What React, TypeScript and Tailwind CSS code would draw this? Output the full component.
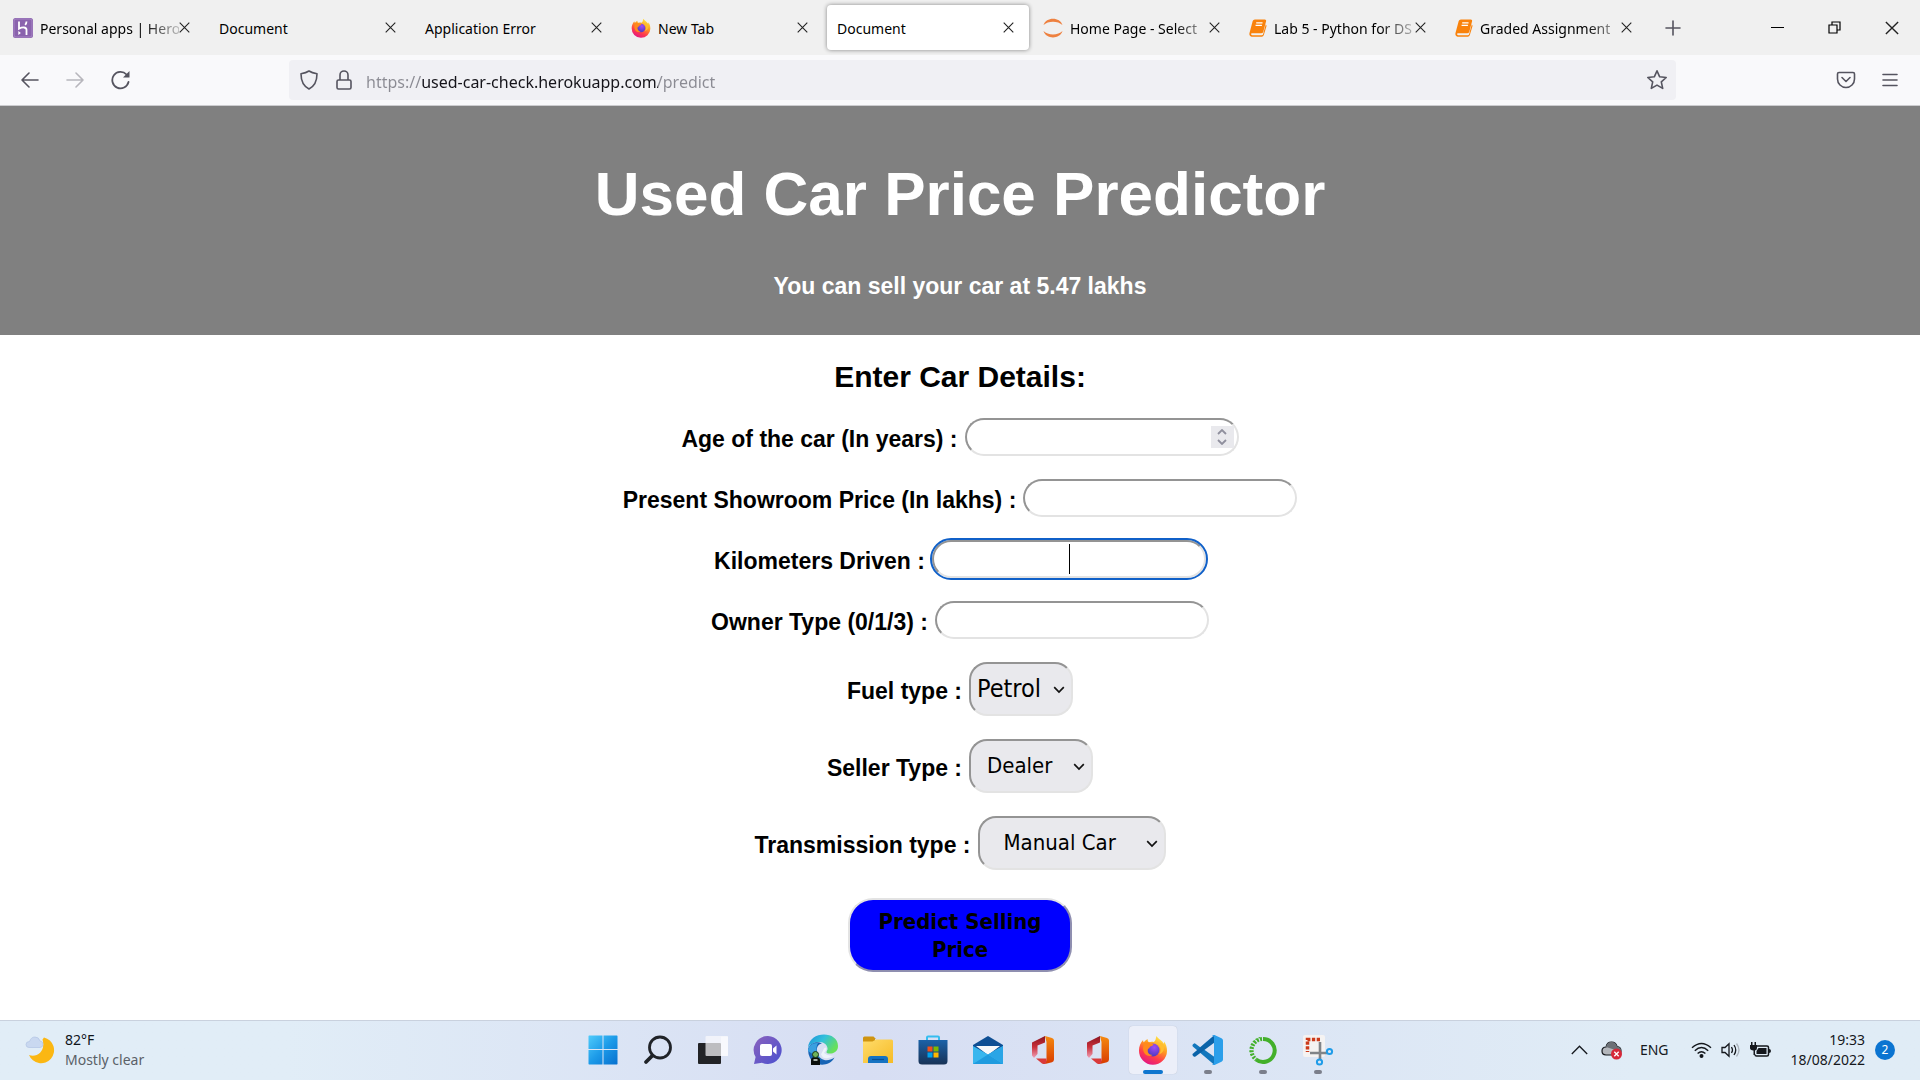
import type { ReactNode } from "react";

const HerokuIcon = () => (
  <svg width="20" height="20" viewBox="0 0 20 20" className="shrink-0">
    <rect width="20" height="20" rx="2.5" fill="#8a63ad" />
    <rect x="1" y="1" width="18" height="18" rx="2" fill="none" stroke="#a786c4" />
    <path d="M6 3.500v7.200c3-1.600 7.500-2 7.500 1.100V17M13.500 3.500c0 1.400-.6 2.500-1.400 3.300" fill="none" stroke="#fff" strokeWidth="1.800" />
    <path d="M5.300 13v4l2.600-2z" fill="#fff" />
  </svg>
);

const FirefoxIcon = ({ size, id }: { size: number; id: string }) => (
  <svg width={size} height={size} viewBox="0 0 30 30" className="shrink-0">
    <defs>
      <linearGradient id={id + "a"} x1="0.8" y1="0" x2="0.3" y2="1">
        <stop offset="0" stopColor="#fff14f" />
        <stop offset="0.4" stopColor="#ff9a1f" />
        <stop offset="0.7" stopColor="#ff3d4a" />
        <stop offset="1" stopColor="#e11586" />
      </linearGradient>
      <radialGradient id={id + "b"} cx="0.6" cy="0.3" r="0.7">
        <stop offset="0" stopColor="#a34cf5" />
        <stop offset="1" stopColor="#4a3ac0" />
      </radialGradient>
    </defs>
    <path d="M18.500 1c-1 2.500-.5 4.500-2.600 6-2-.5-4-.2-5 .3C9.800 6.500 9.500 5 9.600 4 8 4.800 6.800 6 6 7.300c-.8-.4-1-1.500-.9-2.300C2.500 7.500 1 11.500 1 15.500A14 14 0 0 0 29 16c0-4-1-7-3-9.500 0 1 0 1.700-.3 2.300C24.500 5.500 20 4 18.500 1z" fill={"url(#" + id + "a)"} />
    <circle cx="15" cy="15" r="6.500" fill={"url(#" + id + "b)"} />
    <path d="M6 8c2-1 5-.9 6.500.4 1.300 0 2.500.3 3 .9-.6 1.700-2 1.700-3.200 2.300-1 .6-.3 1.800-2.300 2.400C9 17 11 20 14.500 20 11 22.500 5 20 5 13z" fill="#ff8a1c" />
    <path d="M18 8c5 2.500 6 7.500 3 11.500 4-1.500 6-5 4.500-9.500C24 7.500 21 7 18 8z" fill="#ffbd2e" />
  </svg>
);

const JupyterIcon = () => (
  <svg width="20" height="20" viewBox="0 0 20 20" className="shrink-0">
    <path d="M0.500 7C3-1.500 17-1.500 19.500 7 15 2.500 5 2.500 0.500 7z" fill="#ee8140" />
    <path d="M0.500 13C3 21.500 17 21.500 19.500 13 15 17.500 5 17.500 0.500 13z" fill="#ee8140" />
  </svg>
);

const BookIcon = () => (
  <svg width="18" height="18" viewBox="0 0 17 17" className="shrink-0">
    <path d="M5.500.5H15q1.500.2 1.200 1.500L13.500 12q-.5 1.500-2 1.500H3q-1.500 0-1 1 .3.800 1 .8h9q1 0 1.300-1l2.500-9q1 .5.700 1.500l-2.500 8.400q-.5 1.500-2 1.500H2.500Q0 16.300.4 13.500L3.500 2Q4 .6 5.500.5z" fill="#f9820b" />
    <path d="M6.800 3.700h6M6.200 6h6" stroke="#fff" strokeWidth="1.100" />
  </svg>
);

const Close = ({ size = 11 }: { size?: number }) => (
  <svg width={size} height={size} viewBox="0 0 11 11" className="shrink-0">
    <path d="M.7.7l9.600 9.600M10.300.7L.7 10.300" stroke="#222" strokeWidth="1.100" />
  </svg>
);

type TabData = { title: string; icon?: ReactNode; active?: boolean; fade?: boolean };

const tabs: TabData[] = [
  { title: "Personal apps | Hero", icon: <HerokuIcon />, fade: true },
  { title: "Document" },
  { title: "Application Error" },
  { title: "New Tab", icon: <FirefoxIcon size={20} id="t" /> },
  { title: "Document", active: true },
  { title: "Home Page - Select", icon: <JupyterIcon />, fade: true },
  { title: "Lab 5 - Python for DS", icon: <BookIcon />, fade: true },
  { title: "Graded Assignment", icon: <BookIcon />, fade: true },
];

const Tab = ({ title, icon, active, fade }: TabData) => (
  <div
    className={
      "flex h-[45px] w-[202px] items-center rounded pl-[10px] pr-[15px] text-[14px] " +
      (active ? "bg-white shadow-[0_0_4px_rgba(0,0,0,0.45)]" : "")
    }
  >
    {icon && <span className="mr-[7px] shrink-0">{icon}</span>}
    <span
      className={
        "min-w-0 flex-1 whitespace-nowrap pt-[2px] " +
        (fade ? "[mask-image:linear-gradient(to_right,black_75%,rgba(0,0,0,0.2))]" : "")
      }
    >
      {title}
    </span>
    <button aria-label={"Close " + title}>
      <Close />
    </button>
  </div>
);

const stroke = { fill: "none", stroke: "#55545f", strokeWidth: 1.6, strokeLinecap: "round", strokeLinejoin: "round" } as const;

const TabBar = () => (
  <div className="flex h-[55px] items-center bg-[#f0f0f0] pl-[3px]">
    <div className="flex gap-1">
      {tabs.map((t, i) => (
        <Tab key={i} {...t} />
      ))}
    </div>
    <button aria-label="New tab" className="ml-[18px]">
      <svg width="16" height="16" viewBox="0 0 16 16">
        <path d="M8 1v14M1 8h14" {...stroke} />
      </svg>
    </button>
    <div className="ml-auto flex items-center gap-11 pr-[21px]">
      <button aria-label="Minimize">
        <svg width="13" height="13" viewBox="0 0 13 13">
          <path d="M0 6.500h13" stroke="#000" />
        </svg>
      </button>
      <button aria-label="Restore">
        <svg width="13" height="13" viewBox="0 0 13 13" fill="none" stroke="#000" strokeWidth="1.200">
          <path d="M1 4h8v8H1zM4 4V1h8v8H9" />
        </svg>
      </button>
      <button aria-label="Close window">
        <Close size={14} />
      </button>
    </div>
  </div>
);

const NavBar = () => (
  <div className="flex h-[51px] items-center border-b border-[#cccccf] bg-[#f9f9fb]">
    <div className="flex w-[289px] items-center gap-[27px] pl-[21px]">
      <button aria-label="Back">
        <svg width="18" height="18" viewBox="0 0 18 18"><path d="M17 9H1M8 2L1 9l7 7" {...stroke} /></svg>
      </button>
      <button aria-label="Forward" className="opacity-40">
        <svg width="18" height="18" viewBox="0 0 18 18"><path d="M1 9h16M10 2l7 7-7 7" {...stroke} /></svg>
      </button>
      <button aria-label="Reload">
        <svg width="20" height="20" viewBox="0 0 20 20">
          <path d="M17.500 12A8.200 8.200 0 1 1 15.500 4.500L17 6" {...stroke} strokeWidth="1.800" />
          <path d="M18.500 1v6.500H12z" fill="#55545f" />
        </svg>
      </button>
    </div>
    <div className="flex h-10 w-[1387px] min-w-0 shrink items-center rounded bg-[#f0f0f4] pl-[10px] pr-2">
      <svg width="20" height="20" viewBox="0 0 20 20" className="mr-4 shrink-0">
        <path d="M10 1c2.500 1.700 5 2.300 8 2.800 0 7.200-2 12.200-8 15.200C4 16 2 11 2 3.800 5 3.300 7.500 2.700 10 1z" {...stroke} />
      </svg>
      <svg width="18" height="20" viewBox="0 0 18 20" className="mr-[13px] shrink-0">
        <path d="M3.500 10h11q1.500 0 1.500 1.500v6q0 1.500-1.500 1.500h-11Q2 19 2 17.500v-6Q2 10 3.500 10zM5 10V5a4 4 0 0 1 8 0v5" {...stroke} />
      </svg>
      <input
        type="text"
        aria-label="Address"
        defaultValue="https://used-car-check.herokuapp.com/predict"
        className="min-w-0 flex-1 bg-[linear-gradient(to_right,#8b8b93_56px,#15141a_56px,#15141a_292px,#8b8b93_292px)] bg-clip-text pt-[3px] text-[16px] text-transparent outline-none"
      />
      <button aria-label="Bookmark">
        <svg width="22" height="22" viewBox="0 0 22 22">
          <path d="M11 1.800l2.700 6 6.500.7-4.900 4.400 1.400 6.500L11 16.100l-5.700 3.300 1.400-6.500L1.800 8.500l6.500-.7z" {...stroke} />
        </svg>
      </button>
    </div>
    <div className="ml-auto flex items-center gap-[26px] pr-[22px]">
      <button aria-label="Save to Pocket">
        <svg width="20" height="18" viewBox="0 0 20 18">
          <path d="M3 1.500h14q1.500 0 1.500 1.500v5a8.500 8.500 0 0 1-17 0V3Q1.500 1.500 3 1.500zM6 6.500l4 4 4-4" {...stroke} />
        </svg>
      </button>
      <button aria-label="Menu">
        <svg width="16" height="14" viewBox="0 0 16 14"><path d="M1 1.500h14M1 7h14M1 12.500h14" {...stroke} /></svg>
      </button>
    </div>
  </div>
);

const fieldBorder =
  "border-2 border-t-[#949494] border-l-[#949494] border-r-[#e3e3e3] border-b-[#e3e3e3]";

const TextField = ({ id, label, spinner, focused }: { id: string; label: string; spinner?: boolean; focused?: boolean }) => (
  <div className="flex items-center gap-[7px]">
    <label htmlFor={id} className="pt-1">{label}</label>
    <div className="relative">
      <input
        id={id}
        type="text"
        inputMode="numeric"
        className={
          "block h-[38px] w-[274px] rounded-[19px] bg-white px-4 text-center " +
          fieldBorder +
          (focused ? " outline-2 outline-[#1060c8]" : "")
        }
      />
      {spinner && (
        <span className="absolute right-[5px] top-[8px] flex h-[22px] w-[23px] items-center justify-center bg-[#e9e9ed]">
          <svg width="10" height="16" viewBox="0 0 10 16" fill="none" stroke="#8f8f9d" strokeWidth="1.800">
            <path d="M1 5l4-4 4 4M1 11l4 4 4-4" />
          </svg>
        </span>
      )}
      {focused && <span className="absolute left-1/2 top-1 h-[30px] w-px bg-black" />}
    </div>
  </div>
);

const SelectField = ({ id, label, options, look }: { id: string; label: string; options: string[]; look: string }) => (
  <div className="flex items-center gap-[7px]">
    <label htmlFor={id} className="pt-1">{label}</label>
    <div className="relative">
      <select
        id={id}
        className={
          "block h-[54px] appearance-none rounded-[18px] bg-[#e9e9ed] font-['DejaVu_Sans_Condensed','Noto_Sans',sans-serif] font-normal text-black " +
          fieldBorder + " " + look
        }
      >
        {options.map((o) => (
          <option key={o}>{o}</option>
        ))}
      </select>
      <svg width="12" height="8" viewBox="0 0 12 8" className="pointer-events-none absolute right-[8px] top-[24px]">
        <path d="M1.200 1.200L6 6l4.800-4.800" fill="none" stroke="#111" strokeWidth="1.700" />
      </svg>
    </div>
  </div>
);

const Page = () => (
  <main className="flex flex-1 flex-col bg-white font-['Liberation_Sans',Arial,sans-serif] font-bold text-black">
    <header className="flex h-[229px] flex-col items-center bg-[#808080] pt-[52px] text-white">
      <h1 className="text-[62px] leading-[72px]">Used Car Price Predictor</h1>
      <p className="mt-[42px] text-[23px] leading-7">You can sell your car at 5.47 lakhs</p>
    </header>
    <form className="flex flex-col items-center pt-6 text-[23px] leading-7" onSubmit={(e) => e.preventDefault()}>
      <h2 className="text-[30px] leading-9">Enter Car Details:</h2>
      <div className="mt-[23px] flex flex-col items-center gap-[23px]">
        <TextField id="age" label="Age of the car (In years) :" spinner />
        <TextField id="price" label="Present Showroom Price (In lakhs) :" />
        <TextField id="kms" label="Kilometers Driven :" focused />
        <TextField id="owner" label="Owner Type (0/1/3) :" />
        <SelectField id="fuel" label="Fuel type :" options={["Petrol", "Diesel", "CNG"]} look="w-[104px] pl-[6px] text-[25px]" />
        <SelectField id="seller" label="Seller Type :" options={["Dealer", "Individual"]} look="w-[124px] pl-[16px] text-[22px]" />
        <SelectField id="trans" label="Transmission type :" options={["Manual Car", "Automatic Car"]} look="w-[188px] pl-[24px] text-[22px]" />
      </div>
      <button className="mt-[28px] h-[74px] w-[224px] rounded-[25px] border-2 border-b-[#8f8fb0] border-l-[#e3e3e3] border-r-[#8f8fb0] border-t-[#e3e3e3] bg-[#0000ff] px-6 pt-[2px] font-['DejaVu_Sans_Condensed','Noto_Sans',sans-serif] text-[22px] leading-7 text-black">
        Predict Selling Price
      </button>
    </form>
  </main>
);

const OfficeIcon = ({ id }: { id: string }) => (
  <svg width="30" height="30" viewBox="0 0 30 30">
    <defs>
      <linearGradient id={id + "l"} x1="0" y1="0" x2="0" y2="1">
        <stop offset="0" stopColor="#8a1420" />
        <stop offset="0.5" stopColor="#c9303a" />
        <stop offset="1" stopColor="#f0a0b8" />
      </linearGradient>
      <linearGradient id={id + "r"} x1="0" y1="0" x2="0" y2="1">
        <stop offset="0" stopColor="#f58a10" />
        <stop offset="1" stopColor="#d83b01" />
      </linearGradient>
    </defs>
    <path d="M4 7.500L17 1v6.500l-7.500 3V19L6 23l-2-2.500z" fill={"url(#" + id + "l)"} />
    <path d="M17 1l7 2q2 .7 2 2.500v19q0 2-2 2.700L17 29l1.500-4V7z" fill={"url(#" + id + "r)"} />
    <path d="M8 23.500h10.500V27L17 29q-1.500.3-3-.5z" fill="#d93a3a" />
  </svg>
);

const Icons: { name: string; node: ReactNode; state?: "active" | "open" }[] = [
  {
    name: "Start",
    node: (
      <svg width="30" height="30" viewBox="0 0 30 30">
        <defs>
          <linearGradient id="win" x1="0" y1="0" x2="1" y2="1">
            <stop offset="0" stopColor="#4fcbfb" />
            <stop offset="0.5" stopColor="#1c9ae8" />
            <stop offset="1" stopColor="#0670cf" />
          </linearGradient>
        </defs>
        <path d="M1 .5h13.500V14H.5V1zM15.500.5H29l.5.5v13h-14zM.5 15h14v14.500H1L.5 29zM15.500 15h14v14l-.5.500H15.500z" fill="url(#win)" />
      </svg>
    ),
  },
  {
    name: "Search",
    node: (
      <svg width="30" height="30" viewBox="0 0 30 30" fill="none" stroke="#202328" strokeLinecap="round">
        <circle cx="17" cy="12.500" r="10.500" strokeWidth="2.800" />
        <path d="M9.500 20.500L3 27" strokeWidth="3.800" />
      </svg>
    ),
  },
  {
    name: "Task view",
    node: (
      <svg width="32" height="30" viewBox="0 0 32 30">
        <rect x="1" y="8" width="23" height="21" rx="1" fill="#222326" />
        <rect x="8.500" y="1" width="22.500" height="20" rx="1" fill="#fafafc" opacity="0.720" />
        <path d="M24 1.500h7V21h-7z" fill="#fff" opacity="0.500" />
      </svg>
    ),
  },
  {
    name: "Chat",
    node: (
      <svg width="30" height="30" viewBox="0 0 30 30">
        <defs>
          <linearGradient id="chat" x1="0" y1="0" x2="1" y2="1">
            <stop offset="0" stopColor="#8b62bd" />
            <stop offset="1" stopColor="#4a50cf" />
          </linearGradient>
        </defs>
        <path d="M15 1a14 14 0 1 1-6 26.800L1 29l1.600-7A14 14 0 0 1 15 1z" fill="url(#chat)" />
        <rect x="7" y="9" width="12" height="12" rx="2" fill="#fff" />
        <path d="M20 13.500l3.500-3v9l-3.500-3z" fill="#fff" />
      </svg>
    ),
  },
  {
    name: "Edge",
    node: (
      <svg width="32" height="32" viewBox="0 0 32 32">
        <defs>
          <linearGradient id="edge" x1="0" y1="0" x2="1" y2="0.500">
            <stop offset="0" stopColor="#1b8fd8" />
            <stop offset="0.500" stopColor="#32c0dc" />
            <stop offset="1" stopColor="#67e05a" />
          </linearGradient>
        </defs>
        <path d="M1 14C2-3.500 31-3.500 31 12c0 6-5 8-9.500 7.500-3-.4-2-2-1-4C21 11.500 17.500 8 12.500 8 6.500 8 2 11 1 14z" fill="url(#edge)" />
        <path d="M1 15c2-6 9-8.500 14-5.500-5 .5-6 6-4.500 10 2.500 7 10 9 17 4C22.500 33 8 33 3 24q-2-4-2-9z" fill="#1764b5" />
        <path d="M1 17c0-5 5-8.500 10-8-3 5-2 13 5 18z" fill="#3aa0e0" />
        <path d="M17 14.500q2-2 2.500.3-.7 2.700-2.500 4.200 4 3.500 10 2.500-6 4-11 2l-2-3z" fill="#eef4fb" />
        <path d="M4 31v-5q0-3 4.500-3t4.500 3v5z" fill="#0b0f0b" />
        <circle cx="8.500" cy="20.500" r="3" fill="#6fb35a" stroke="#1b3a1b" />
        <path d="M6.500 26h4" stroke="#dfeadf" strokeWidth="1.500" />
      </svg>
    ),
  },
  {
    name: "File Explorer",
    node: (
      <svg width="32" height="30" viewBox="0 0 32 30">
        <defs>
          <linearGradient id="fold" x1="0" y1="0" x2="1" y2="1">
            <stop offset="0" stopColor="#ffdc6b" />
            <stop offset="1" stopColor="#f6bb26" />
          </linearGradient>
        </defs>
        <path d="M1 3q0-1.500 1.500-1.500h9L14 4h-1v5H1z" fill="#cf9410" />
        <path d="M1 6.500h9.500L14 4.500h15.500Q31 4.500 31 6v22H1z" fill="url(#fold)" />
        <path d="M6 28v-4q0-3 3-3h14q3 0 3 3v4z" fill="#1673c2" />
        <path d="M10 24.500h12" stroke="#0b4f91" strokeWidth="1.200" />
      </svg>
    ),
  },
  {
    name: "Microsoft Store",
    node: (
      <svg width="30" height="30" viewBox="0 0 30 30">
        <defs>
          <linearGradient id="store" x1="0" y1="0" x2="0" y2="1">
            <stop offset="0" stopColor="#1b62a8" />
            <stop offset="1" stopColor="#183256" />
          </linearGradient>
        </defs>
        <path d="M9 6V2.500Q9 1.500 10 1.500h10q1 0 1 1V6" fill="none" stroke="#35bdf0" strokeWidth="2" />
        <path d="M.5 5h29v21q0 3.500-3.500 3.500H4Q.5 29.500.5 26z" fill="url(#store)" />
        <path d="M9.500 11.500h5v5h-5z" fill="#f2511b" />
        <path d="M15.500 11.500h5v5h-5z" fill="#7eb900" />
        <path d="M9.500 17.500h5v5h-5z" fill="#00a3ee" />
        <path d="M15.500 17.500h5v5h-5z" fill="#feb800" />
      </svg>
    ),
  },
  {
    name: "Mail",
    node: (
      <svg width="30" height="30" viewBox="0 0 30 30">
        <path d="M0 10L15 1l15 9v10H0z" fill="#0f4f94" />
        <path d="M3 11h24L15 20z" fill="#f8f9fb" />
        <path d="M0 11l15 8.500L30 11v18H0z" fill="#38b6ee" />
        <path d="M0 29l15-9.500L30 29z" fill="#1f9bdf" />
        <path d="M30 11v18L15 19.500z" fill="#2aa5e6" />
      </svg>
    ),
  },
  { name: "Office", node: <OfficeIcon id="o1" /> },
  { name: "Office 365", node: <OfficeIcon id="o2" /> },
  { name: "Firefox", node: <FirefoxIcon size={30} id="f" />, state: "active" },
  {
    name: "Visual Studio Code",
    node: (
      <svg width="32" height="32" viewBox="0 0 32 32">
        <path d="M22.500 1L8.500 13.500 3.500 9.700Q2.500 9 1.700 9.700L.8 10.600q-.8 1 0 1.800L22.500 31V23L8.500 13z" fill="#1277bd" />
        <path d="M22.500 1L.8 19.800q-.8.900 0 1.800l.9.900q.8.700 1.800 0L22.500 8.500z" fill="#0a63a8" />
        <path d="M22.500 1l7 3.200Q31 5 31 6.500v19q0 1.500-1.500 2.300L22.500 31q-1.500.3-2.500-1 2 .5 2-1.500v-25Q22 1.500 20 2q1-1.300 2.500-1z" fill="#2b9fea" />
      </svg>
    ),
    state: "open",
  },
  {
    name: "Anaconda",
    node: (
      <svg width="30" height="30" viewBox="0 0 30 30" fill="none" stroke="#43b02a">
        <path d="M15 4a11.500 11.500 0 1 1-7 20.500" strokeWidth="4" />
        <path d="M14 4A11.500 11.500 0 0 0 8 24.500" strokeWidth="4" strokeDasharray="2 1.300" />
        <path d="M12 2.500A13 13 0 0 0 3 20" strokeWidth="1.200" strokeDasharray="1.500 2" />
      </svg>
    ),
    state: "open",
  },
  {
    name: "Snipping Tool",
    node: (
      <svg width="32" height="32" viewBox="0 0 32 32">
        <rect x="1" y="1" width="22" height="22" rx="2" fill="#f5f3f2" />
        <path d="M18 5.500H5.500V18" fill="none" stroke="#cc3a1a" strokeWidth="3.500" strokeDasharray="3.300 1.500" />
        <path d="M18 8v17M8 19h17" fill="none" stroke="#808488" strokeWidth="2.600" />
        <circle cx="17.500" cy="28" r="2.600" fill="none" stroke="#1f9ce8" strokeWidth="2" />
        <circle cx="27.500" cy="17.500" r="2.600" fill="none" stroke="#1f9ce8" strokeWidth="2" />
      </svg>
    ),
    state: "open",
  },
];

const Taskbar = () => (
  <footer className="grid h-[60px] grid-cols-[1fr_auto_1fr] items-center border-t border-[#c9d1de] bg-linear-to-r from-[#e1edf7] from-15% via-[#d7def3] via-45% to-[#e0ecf6] to-85% pb-[2px]">
    <button className="flex items-center gap-[10px] justify-self-start pl-[25px] text-left text-[14px] leading-5">
      <svg width="30" height="30" viewBox="0 0 30 30">
        <path d="M19 2.500A13 13 0 1 1 4 20C12 23 21 16 17.500 4.500z" fill="#fbb713" />
        <path d="M4 12.500q-3 0-3-3t3.500-3Q6 2 10 2t5 4q3 .3 3 3.300t-3 3.200z" fill="#c9d8f0" stroke="#b2c4e4" strokeWidth="0.700" />
      </svg>
      <span>
        <span className="block text-[#10141a]">82°F</span>
        <span className="block text-[#5b6168]">Mostly clear</span>
      </span>
    </button>
    <div className="flex gap-[7px]">
      {Icons.map((it) => (
        <button
          key={it.name}
          aria-label={it.name}
          className={
            "relative flex size-12 items-center justify-center rounded " +
            (it.state === "active" ? "bg-[#eceff9] shadow-[0_0_1px_rgba(0,0,0,0.2)]" : "")
          }
        >
          {it.node}
          {it.state === "active" && <span className="absolute bottom-0 h-1 w-5 rounded-full bg-[#0f76cf]" />}
          {it.state === "open" && <span className="absolute bottom-0 h-1 w-2 rounded-full bg-[#7b7f8b]" />}
        </button>
      ))}
    </div>
    <div className="flex items-center justify-self-end pr-[25px] text-[14px] leading-5 text-[#15181d]">
      <button aria-label="Show hidden icons" className="mr-[13px]">
        <svg width="17" height="10" viewBox="0 0 17 10"><path d="M.8 9L8.500 1.200 16.200 9" fill="none" stroke="#15181d" strokeWidth="1.300" /></svg>
      </button>
      <button aria-label="OneDrive" className="mr-[17px]">
        <svg width="22" height="20" viewBox="0 0 22 20">
          <path d="M5 15q-4 0-4-4t4-4q1-5 5.500-5T16 6.500q4 .5 4 4.500t-4 4z" fill="#b3b6bb" stroke="#15181d" strokeWidth="1.200" />
          <path d="M5 7q1-5 5.500-5T16 6.500q4 .5 4 4l-7-1z" fill="#6c7076" />
          <circle cx="15.500" cy="14" r="5.500" fill="#d62839" />
          <path d="M13.300 11.800l4.400 4.400M17.700 11.800l-4.400 4.400" stroke="#fff" strokeWidth="1.300" />
        </svg>
      </button>
      <button className="mr-[22px]">ENG</button>
      <button aria-label="Network, volume and battery" className="mr-[19px] flex items-center gap-[9px]">
        <svg width="21" height="16" viewBox="0 0 21 16" fill="none" stroke="#15181d" strokeWidth="1.400">
          <path d="M1 5.800Q10.500-3 20 5.800M3.800 8.700q6.700-6.200 13.400 0M6.600 11.500q3.900-3.600 7.800 0" />
          <circle cx="10.500" cy="14" r="1.300" fill="#15181d" />
        </svg>
        <svg width="20" height="16" viewBox="0 0 20 16" fill="none" stroke="#15181d" strokeWidth="1.300">
          <path d="M1 5.500h3L8 1.700v12.600L4 10.500H1zM10.500 5q2 3 0 6M13 3q3.500 5 0 10" />
          <path d="M15.500 1.500q5 6.500 0 13" stroke="#aab2bb" />
        </svg>
        <svg width="22" height="16" viewBox="0 0 22 16">
          <path d="M7 4h10q1.500 0 1.500 1.500v7Q18.500 14 17 14H6.500Q5 14 5 12.500" fill="none" stroke="#15181d" strokeWidth="1.500" />
          <path d="M8.500 6h8v6h-10V9z" fill="#15181d" />
          <path d="M19 7q2 0 2 2t-2 2zM0 3h7v3q0 2-2 2.500V13H3.500V8.500Q0 8 0 6zM1 0h1.500v3H1zM4.500 0H6v3H4.500z" fill="#15181d" />
        </svg>
      </button>
      <button className="mr-[10px] text-right">
        <span className="block">19:33</span>
        <span className="block">18/08/2022</span>
      </button>
      <button className="flex size-5 items-center justify-center rounded-full bg-[#0b74d1] text-xs text-white">2</button>
    </div>
  </footer>
);

export default function App() {
  return (
    <div className="flex min-h-screen flex-col font-['Noto_Sans','Open_Sans',sans-serif] text-black">
      <TabBar />
      <NavBar />
      <Page />
      <Taskbar />
    </div>
  );
}
